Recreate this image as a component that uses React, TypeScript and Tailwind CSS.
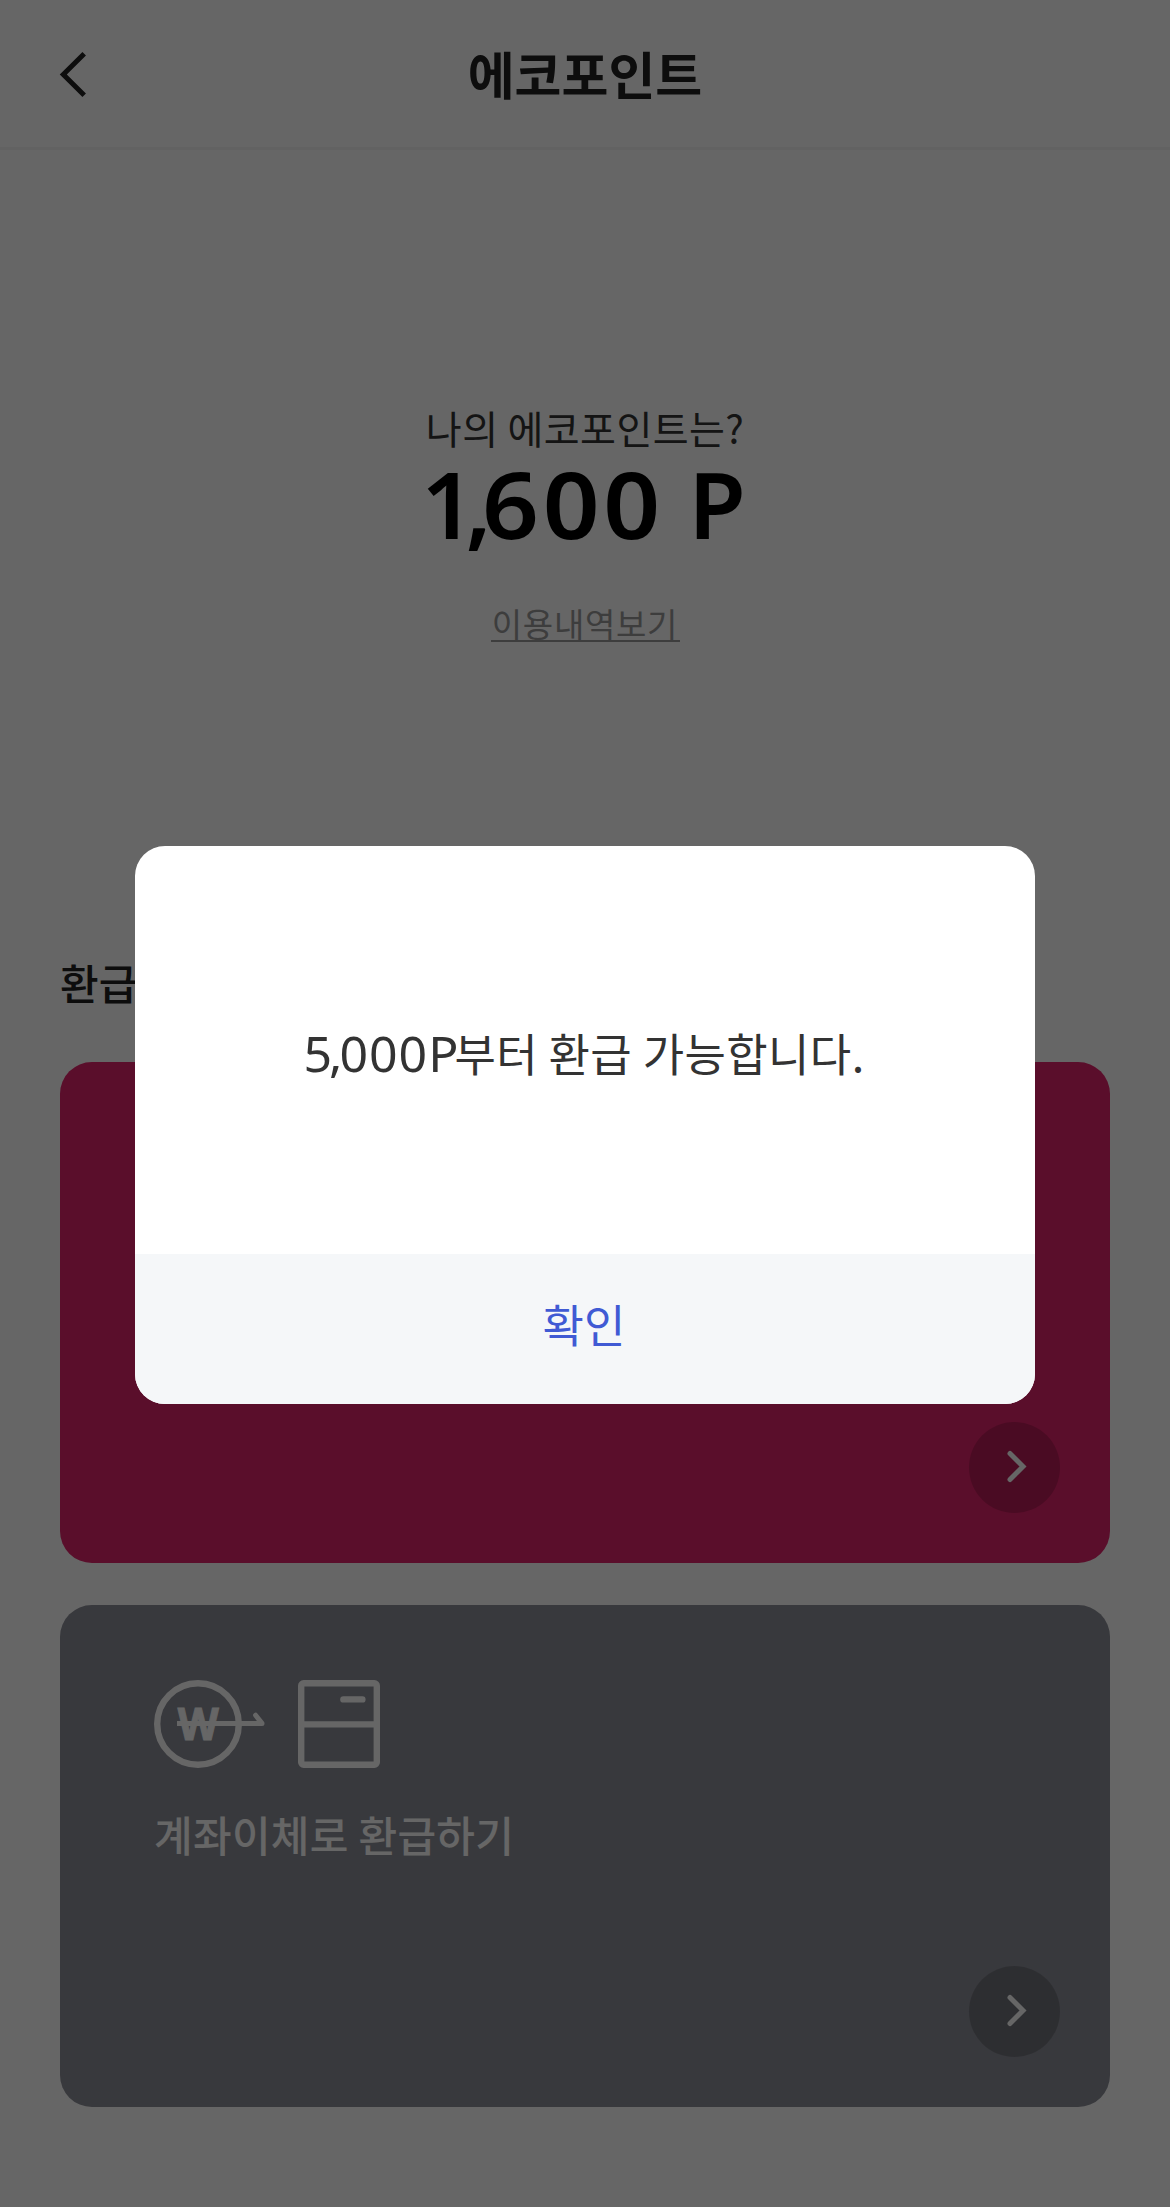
const latin = "font-['Noto_Sans','Open_Sans',sans-serif]";

function WonTransferIcon() {
  return (
    <svg width="112" height="88" viewBox="0 0 112 88" fill="none">
      <circle cx="44" cy="44" r="40.8" stroke="white" strokeWidth="6.4" />
      <text
        x="44.2"
        y="60"
        textAnchor="middle"
        fontSize="45"
        fontWeight="700"
        fill="white"
        stroke="white"
        strokeWidth="1"
        textLength="41"
        lengthAdjust="spacingAndGlyphs"
        className="font-['Noto_Sans',sans-serif]"
      >
        W
      </text>
      <path d="M23 43.4H108" stroke="white" strokeWidth="5" />
      <path
        d="M100 43.4H108L101.6 35.2"
        stroke="white"
        strokeWidth="5"
        strokeLinecap="round"
        strokeLinejoin="round"
      />
    </svg>
  );
}

function FridgeIcon() {
  return (
    <svg width="82" height="88" viewBox="0 0 82 88" fill="none">
      <rect x="3.2" y="3.2" width="75.6" height="81.6" rx="2.5" stroke="white" strokeWidth="6.4" />
      <path d="M3 44.4H79" stroke="white" strokeWidth="6.4" />
      <path d="M45.4 19.4H64.4" stroke="white" strokeWidth="6.4" strokeLinecap="round" />
    </svg>
  );
}

function ArrowButton() {
  return (
    <button className="flex h-[91px] w-[91px] items-center justify-center rounded-full bg-black/18">
      <svg width="91" height="91" viewBox="0 0 91 91" fill="none">
        <path d="M41 31.5L54 44.5L41 57.5" stroke="white" strokeWidth="5" strokeLinecap="round" />
      </svg>
    </button>
  );
}

export default function App() {
  return (
    <div className="relative h-[2207px] w-[1170px] overflow-hidden bg-white font-['Noto_Sans_CJK_KR',sans-serif]">
      {/* Header */}
      <header className="relative flex h-[150px] items-center justify-center border-b-3 border-[#f5f5f5]">
        <button className="absolute top-[51px] left-[59px]">
          <svg width="30" height="47" viewBox="0 0 30 47" fill="none">
            <path d="M25.2 2.8L4.3 23.5L25.2 44.2" stroke="#222222" strokeWidth="5" />
          </svg>
        </button>
        <h1 className="text-[51px] leading-[75px] font-bold text-[#222222]">에코포인트</h1>
      </header>

      {/* Points */}
      <section className="flex flex-col items-center pt-[248px]">
        <p className="text-[39px] leading-[58px] tracking-[0.4px] text-[#333333]">
          나의 에코포인트는?
        </p>
        <p className={`${latin} flex pr-[3px] text-[93px] leading-[94px] font-semibold text-black`}>
          <span className="tracking-[-9px]">1,</span>
          <span className="origin-left scale-x-107 tracking-[3.5px]">600</span>
          <span className="ml-[36px]">P</span>
        </p>
        <a className="mt-[52px] h-[40px] w-[189px] border-b-2 border-[#999999] text-center text-[33px] leading-[42px] tracking-[0.7px] text-[#999999]">
          이용내역보기
        </a>
      </section>

      {/* Refund methods */}
      <section className="px-[60px] pt-[308px]">
        <h2 className="h-[112px] text-[42px] leading-[64px] font-medium text-[#222222]">환급 방법</h2>
        <div className="flex h-[501px] items-end justify-end rounded-[32px] bg-[#e1236b] pr-[50px] pb-[50px]">
          <ArrowButton />
        </div>
        <div className="mt-[42px] flex h-[502px] flex-col justify-between rounded-[32px] bg-[#8c8e98] pt-[75px] pr-[50px] pb-[50px] pl-[94px]">
          <div>
            <div className="flex gap-[32px]">
              <WonTransferIcon />
              <FridgeIcon />
            </div>
            <p className="mt-[34px] text-[42px] leading-[64px] font-medium tracking-[0.3px] text-white">
              계좌이체로 환급하기
            </p>
          </div>
          <div className="flex justify-end">
            <ArrowButton />
          </div>
        </div>
      </section>

      {/* Dialog */}
      <div className="absolute inset-0 flex justify-center bg-black/60 pt-[846px]">
        <div className="flex h-[558px] w-[900px] flex-col overflow-hidden rounded-[30px] bg-white">
          <p className="flex h-[408px] items-center justify-center pt-[5px] pr-[2px] text-[45px] leading-[66px] tracking-[0.4px] text-[#333333]">
            <span className={`${latin} text-[50px] tracking-[-3px]`}>5,</span>
            <span className={`${latin} text-[50px] tracking-[1px]`}>000</span>
            <span className={`${latin} text-[50px] tracking-[-4px]`}>P</span>
            부터 환급 가능합니다.
          </p>
          <button className="h-[150px] bg-[#f5f7f9] pr-[2px] pb-[11px] text-[45px] text-[#405ad4]">
            확인
          </button>
        </div>
      </div>
    </div>
  );
}
